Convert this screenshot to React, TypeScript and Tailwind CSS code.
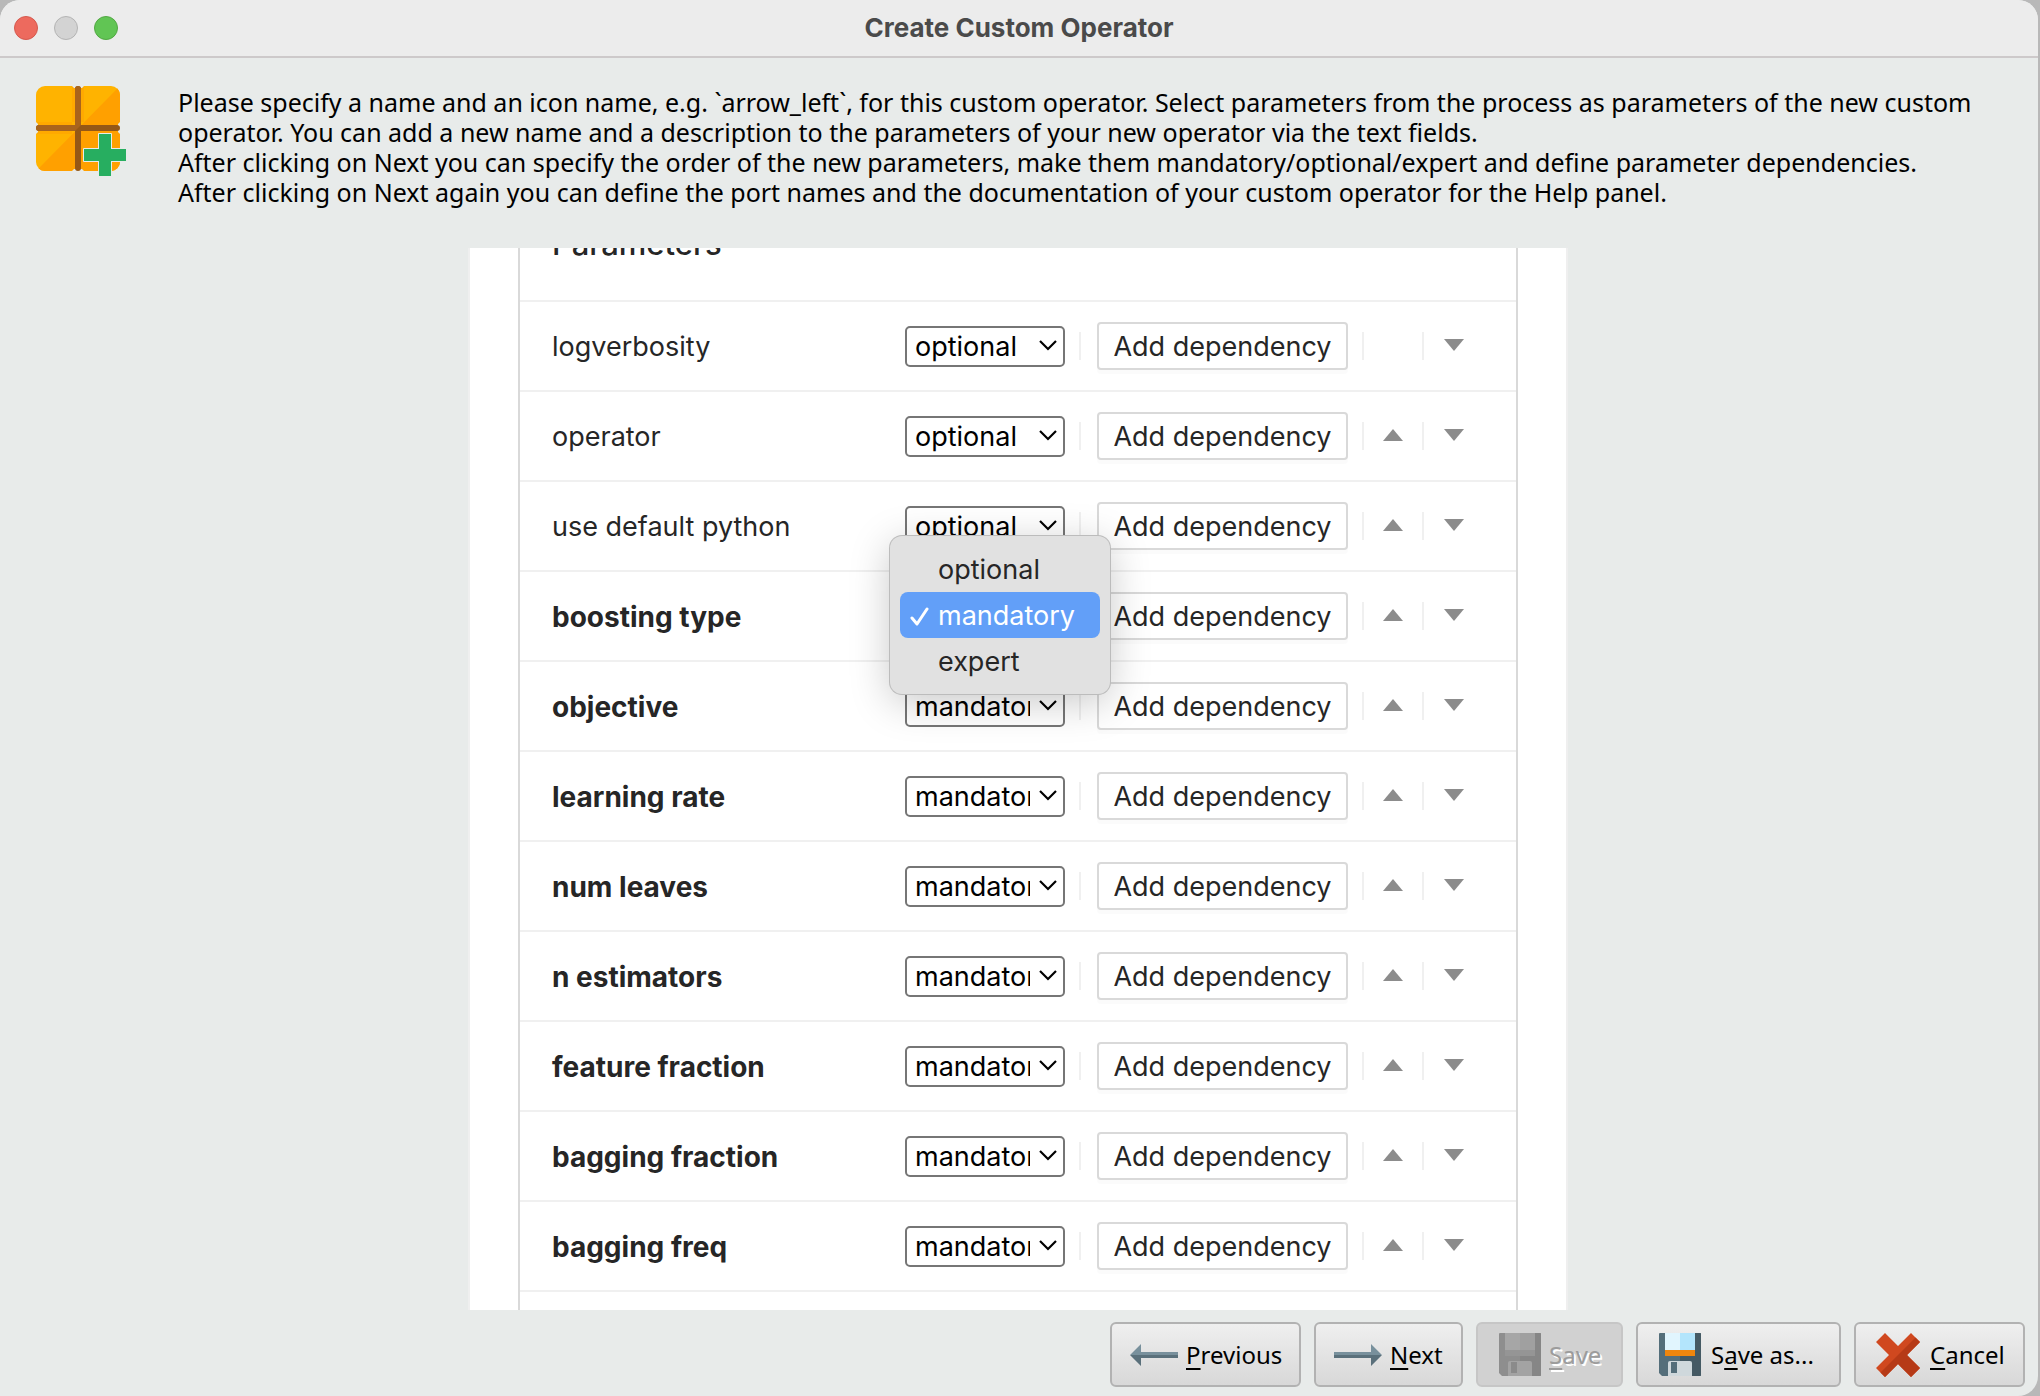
import type { ReactNode } from 'react';

type Level = 'optional' | 'mandatory' | 'expert';

const levels: Level[] = ['optional', 'mandatory', 'expert'];

const parameters: { name: string; level: Level; open?: boolean }[] = [
  { name: 'logverbosity', level: 'optional' },
  { name: 'operator', level: 'optional' },
  { name: 'use default python', level: 'optional' },
  { name: 'boosting type', level: 'mandatory', open: true },
  { name: 'objective', level: 'mandatory' },
  { name: 'learning rate', level: 'mandatory' },
  { name: 'num leaves', level: 'mandatory' },
  { name: 'n estimators', level: 'mandatory' },
  { name: 'feature fraction', level: 'mandatory' },
  { name: 'bagging fraction', level: 'mandatory' },
  { name: 'bagging freq', level: 'mandatory' },
];

function OperatorIcon() {
  return (
    <svg viewBox="0 0 92 92" className="size-[92px] shrink-0" aria-hidden="true">
      <rect width="84" height="85" rx="9" fill="#ffb300" />
      <path d="M84 9v67a9 9 0 0 1-9 9H9a9 9 0 0 1-6.400-2.600L81.400 2.600A9 9 0 0 1 84 9z" fill="#ffa000" />
      <path d="M36 0h3v36h-3zM45 0h3v36h-3zM0 36h36v3H0zM0 45h36v3H0z" fill="#ffa000" opacity=".5" />
      <path d="M36 0h12l-2 2h-8zM36 85h12l-2-2h-8zM0 36v12l2-2v-8zM84 36v12l-2-2v-8z" fill="#e8ebea" />
      <path d="M42 3v79M3 42h78" stroke="#955816" strokeWidth="6" strokeLinecap="round" />
      <path d="M42 3v39H3" stroke="#a9641c" strokeWidth="6" strokeLinecap="round" fill="none" />
      <path d="M45 39v6h-6z" fill="#955816" />
      <path
        d="M63 48h12v15h15v12H75v15H63V75H48V63h15z"
        fill="#27ae60"
        stroke="#e8ebea"
        strokeWidth="2"
        strokeLinejoin="round"
        paintOrder="stroke"
      />
    </svg>
  );
}

function FloppyIcon({ disabled }: { disabled?: boolean }) {
  const c = disabled
    ? ['#8e8e8e', '#868686', '#a6a6a6', '#a0a0a0', '#959595', '#a3a3a3', '#8b8b8b']
    : ['#546e7a', '#455a64', '#e1f5fe', '#b3e5fc', '#ef860e', '#cfd8dc', '#546e7a'];
  return (
    <svg viewBox="0 0 42 43" className="h-[43px] w-[42px]" aria-hidden="true">
      <path d="M1 0h40a1 1 0 0 1 1 1v41a1 1 0 0 1-1 1H3l-3-3V1a1 1 0 0 1 1-1z" fill={c[0]} />
      <path d="M21 0h20a1 1 0 0 1 1 1v41a1 1 0 0 1-1 1H21z" fill={c[1]} />
      <path d="M6 0h15v17H6z" fill={c[2]} />
      <path d="M21 0h15v17H21z" fill={c[3]} />
      <path d="M6 17h30v6H6z" fill={c[4]} />
      <path d="M11 28h20a2 2 0 0 1 2 2v13H9V30a2 2 0 0 1 2-2z" fill={c[5]} />
      <path d="M12 29h6v11h-6z" fill={c[6]} />
    </svg>
  );
}

function ArrowIcon({ right }: { right?: boolean }) {
  return (
    <svg
      viewBox="0 0 48 22"
      className={right ? 'h-[22px] w-12 -scale-x-100' : 'h-[22px] w-12'}
      aria-hidden="true"
    >
      <path d="M0 11L11 0v8h37v3z" fill="#78909c" />
      <path d="M0 11L11 22v-8h37v-3z" fill="#5a707b" />
    </svg>
  );
}

function CrossIcon() {
  return (
    <svg viewBox="0 0 44 44" className="size-11" aria-hidden="true">
      <path d="M9 0l13 13L35 0l9 9-13 13 13 13-9 9-13-13L9 44l-9-9 13-13L0 9z" fill="#d0481f" />
      <path d="M39.500 4.500L44 9 31 22l13 13-9 9-13-13L9 44l-4.500-4.500z" fill="#b63a17" />
    </svg>
  );
}

function FooterButton({
  icon,
  disabled,
  className,
  children,
}: {
  icon: ReactNode;
  disabled?: boolean;
  className: string;
  children: ReactNode;
}) {
  return (
    <button
      type="button"
      disabled={disabled}
      className={`flex h-[65px] items-center rounded-md border-2 text-[24px] ${className} ${
        disabled
          ? 'border-[#c6c6c6] bg-[#d1d1d1] text-[#9c9c9c] [text-shadow:2px_2px_0_#fff]'
          : 'border-[#b2b2b2] bg-linear-to-b from-[#efefef] to-[#d8d8d8] text-black'
      }`}
    >
      {icon}
      <span>{children}</span>
    </button>
  );
}

function Key({ children }: { children: string }) {
  return <span className="underline decoration-2 underline-offset-4">{children}</span>;
}

function LevelSelect({ name, level, open }: { name: string; level: Level; open?: boolean }) {
  return (
    <div className="relative flex h-[41px] w-40">
      <select
        aria-label={`${name} level`}
        defaultValue={level}
        className="w-full appearance-none rounded-[5px] border-2 border-[#767676] bg-white pt-px pr-[33px] pl-2 text-[27px] leading-9 text-black"
      >
        {levels.map((l) => (
          <option key={l}>{l}</option>
        ))}
      </select>
      <svg
        viewBox="0 0 18 11"
        className="pointer-events-none absolute top-[14px] right-2 h-[11px] w-[18px]"
        fill="none"
        stroke="#000"
        strokeWidth="2.200"
        aria-hidden="true"
      >
        <path d="M1 1l8 8 8-8" />
      </svg>
      {open && (
        <ul
          role="listbox"
          aria-label={`${name} options`}
          className="absolute -top-[60px] -left-[15px] z-10 w-[220px] rounded-xl bg-[#e1e1e1] p-[10px] text-[27px] text-[#262626] shadow-[0_0_0_1px_#bcbcbc,0_8px_40px_rgba(0,0,0,0.22)]"
        >
          {levels.map((l) => (
            <li
              key={l}
              role="option"
              aria-selected={l === level}
              className={`flex h-[46px] items-center rounded-lg pt-1 pl-[10px] ${l === level ? 'bg-[#629ff8] text-white' : ''}`}
            >
              <span className="w-7">
                {l === level && (
                  <svg viewBox="0 0 20 20" className="size-5" fill="none" aria-hidden="true">
                    <path
                      d="M2 11l5 6L17 2"
                      stroke="#fff"
                      strokeWidth="3"
                      strokeLinecap="round"
                      strokeLinejoin="round"
                    />
                  </svg>
                )}
              </span>
              {l}
            </li>
          ))}
        </ul>
      )}
    </div>
  );
}

function MoveButton({ up, label }: { up?: boolean; label: string }) {
  return (
    <button type="button" aria-label={label} className="flex h-7 w-full items-center justify-center">
      <svg viewBox="0 0 20 12" className="mb-[2px] h-3 w-5" fill="#8c8c8c" aria-hidden="true">
        <path d={up ? 'M0 12L10 0l10 12z' : 'M0 0h20L10 12z'} />
      </svg>
    </button>
  );
}

export default function App() {
  return (
    <div className="min-h-screen bg-[#b8b8b8] pr-[2px]">
      <main className="flex min-h-screen flex-col rounded-t-[20px] rounded-br-[20px] bg-[#e8ebea] font-['Noto_Sans',sans-serif] text-black">
        <header className="flex h-[58px] items-center rounded-t-[20px] border-b-2 border-[#cdc9ca] bg-[#ececec] px-[14px]">
          <div className="flex flex-1 gap-4">
            <button type="button" aria-label="Close" className="size-6 rounded-full border border-[#d5594e] bg-[#ed6a5e]" />
            <button type="button" aria-label="Minimize" className="size-6 rounded-full border border-[#b4b4b4] bg-[#d3d3d3]" />
            <button type="button" aria-label="Zoom" className="size-6 rounded-full border border-[#52a843] bg-[#61c554]" />
          </div>
          <h1 className="pb-[2px] font-['Inter',sans-serif] text-[26px] font-bold text-[#4a4a4a]">
            Create Custom Operator
          </h1>
          <div className="flex-1" />
        </header>

        <section className="flex gap-[50px] px-9 pt-7">
          <OperatorIcon />
          <p className="pt-px text-[25px] leading-[30px]">
            Please specify a name and an icon name, e.g. `arrow_left`, for this custom operator. Select parameters from the process as parameters of the new custom
            <br />
            operator. You can add a new name and a description to the parameters of your new operator via the text fields.
            <br />
            After clicking on Next you can specify the order of the new parameters, make them mandatory/optional/expert and define parameter dependencies.
            <br />
            After clicking on Next again you can define the port names and the documentation of your custom operator for the Help panel.
          </p>
        </section>

        {/* scrolled parameter list, heading partly above the fold */}
        <div className="flex justify-center pt-[41px] pr-[2px]">
          <section className="flex h-[1062px] w-[1100px] flex-col justify-end overflow-hidden border-x-2 border-[#efefef] bg-white px-12 font-['Inter',sans-serif] text-[27px] text-[#262626]">
            <div className="border-x-2 border-[#d9d9d9] pb-[18px]">
              <h2 className="h-[76px] border-b-2 border-[#f0f0f0] pl-8 text-[31px] leading-9 font-medium">
                Parameters
              </h2>
              <table className="w-full table-fixed border-separate border-spacing-0">
                <colgroup>
                  <col className="w-[385px]" />
                  <col className="w-[174px]" />
                  <col className="w-[285px]" />
                  <col className="w-[60px]" />
                  <col />
                </colgroup>
                <tbody>
                  {parameters.map((p, i) => (
                    <tr key={p.name} className="h-[90px] *:border-b-2 *:border-[#f0f0f0]">
                      <th
                        scope="row"
                        className={`pt-[2px] pl-8 text-left ${p.level === 'mandatory' ? 'text-[28px] font-bold' : 'font-normal'}`}
                      >
                        {p.name}
                      </th>
                      <td>
                        <LevelSelect {...p} />
                      </td>
                      <td>
                        <div className="flex h-7 items-center border-x-2 border-[#f0f0f0] pl-4">
                          <button
                            type="button"
                            className="h-12 w-[251px] rounded-sm border-2 border-[#d9d9d9] bg-white pt-[2px] shadow-[0_4px_0_rgba(0,0,0,0.016)]"
                          >
                            Add dependency
                          </button>
                        </div>
                      </td>
                      <td>
                        <div className="h-7 border-r-2 border-[#f0f0f0]">
                          {i > 0 && <MoveButton up label={`Move ${p.name} up`} />}
                        </div>
                      </td>
                      <td>
                        <div className="w-[60px]">
                          <MoveButton label={`Move ${p.name} down`} />
                        </div>
                      </td>
                    </tr>
                  ))}
                </tbody>
              </table>
            </div>
          </section>
        </div>

        <footer className="flex justify-end gap-[13px] pt-3 pr-[13px] pb-2">
          <FooterButton className="w-[191px] gap-2 pl-[18px]" icon={<ArrowIcon />}>
            <Key>P</Key>revious
          </FooterButton>
          <FooterButton className="w-[149px] gap-2 pl-[18px]" icon={<ArrowIcon right />}>
            <Key>N</Key>ext
          </FooterButton>
          <FooterButton className="w-[147px] gap-2 pl-[21px]" disabled icon={<FloppyIcon disabled />}>
            <Key>S</Key>ave
          </FooterButton>
          <FooterButton className="w-[205px] gap-[10px] pl-[21px]" icon={<FloppyIcon />}>
            S<Key>a</Key>ve as...
          </FooterButton>
          <FooterButton className="w-[171px] gap-[10px] pl-5" icon={<CrossIcon />}>
            <Key>C</Key>ancel
          </FooterButton>
        </footer>
      </main>
    </div>
  );
}
